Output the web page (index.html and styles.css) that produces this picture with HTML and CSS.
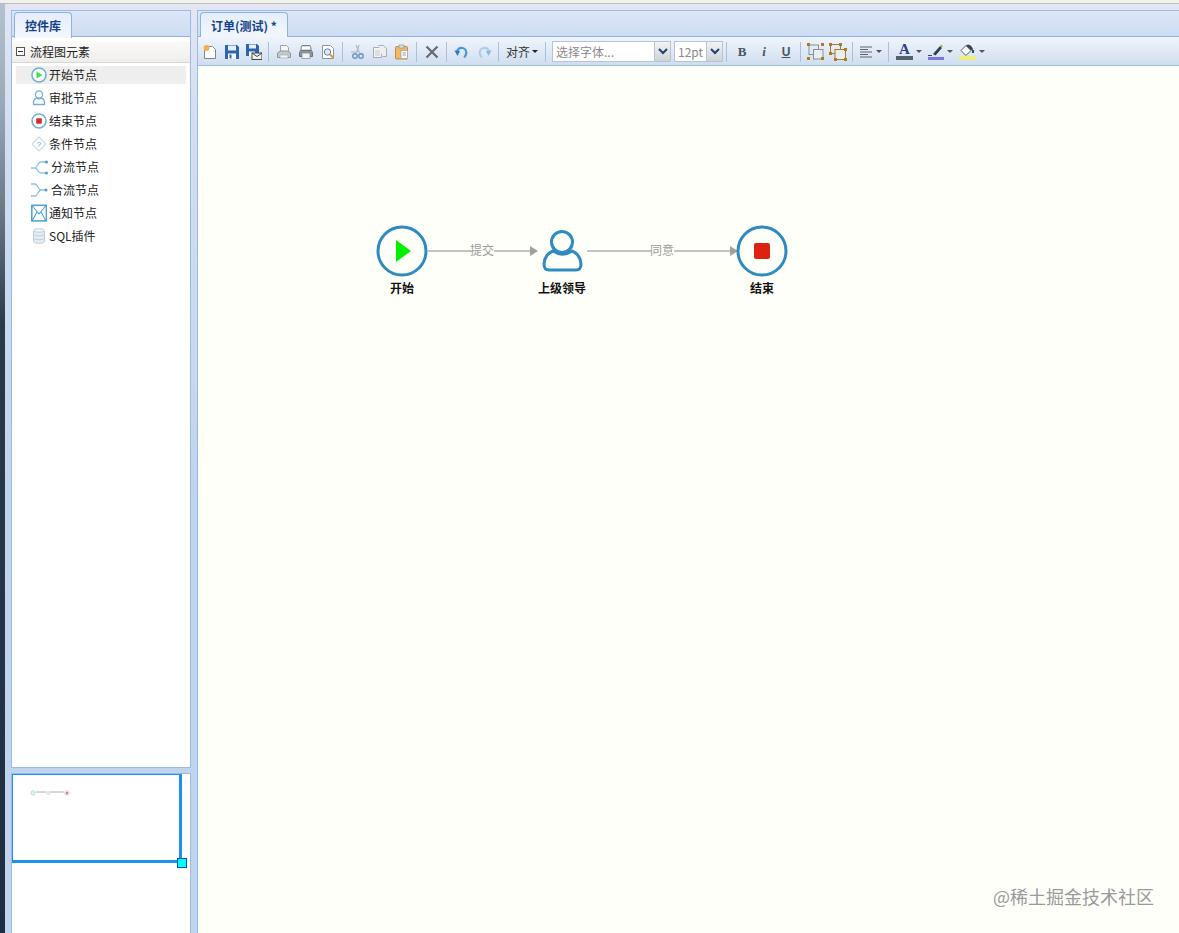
FILE: index.html
```html
<!DOCTYPE html>
<html lang="zh">
<head>
<meta charset="utf-8">
<title>流程设计器</title>
<link rel="stylesheet" href="styles.css">
</head>
<body>
<div class="shell">
  <div class="topline"></div>
  <div class="main">
    <div class="desk-edge"></div>
    <aside class="west">
      <section class="panel tree-panel">
        <div class="tabstrip"><div class="tab tab-lib">控件库</div></div>
        <div class="tree-head">
          <svg class="collapse" width="9" height="9" viewBox="0 0 9 9"><rect x=".5" y=".5" width="8" height="8" fill="#fff" stroke="#555"/><path d="M2 4.5h5" stroke="#333"/></svg>
          <span>流程图元素</span>
        </div>
        <ul class="tree">
          <li class="tree-item selected">
            <svg width="16" height="18" viewBox="0 0 16 18"><circle cx="8" cy="9" r="7" fill="#fff" stroke="#6fb0cf" stroke-width="1.6"/><path d="M5.5 5.5l6 3.5-6 3.5z" fill="#3fe04a"/></svg>开始节点</li>
          <li class="tree-item">
            <svg width="16" height="18" viewBox="0 0 16 18"><circle cx="8" cy="5.5" r="3.6" fill="#fff" stroke="#6fb0cf" stroke-width="1.3"/><path d="M2.5 15.5v-2.2c0-2.2 2-3.8 3.2-4.2 1.4.8 3.2.8 4.6 0 1.2.4 3.2 2 3.2 4.2v2.2z" fill="#fff" stroke="#6fb0cf" stroke-width="1.3" stroke-linejoin="round"/></svg>审批节点</li>
          <li class="tree-item">
            <svg width="16" height="18" viewBox="0 0 16 18"><circle cx="8" cy="9" r="7" fill="#fff" stroke="#6fb0cf" stroke-width="1.6"/><rect x="5.2" y="6.2" width="5.6" height="5.6" rx="1" fill="#d92b1c"/></svg>结束节点</li>
          <li class="tree-item">
            <svg width="16" height="18" viewBox="0 0 16 18"><path d="M8 2l7 7-7 7-7-7z" fill="#fff" stroke="#c6dbe8" stroke-width="1.2"/><text x="8" y="12" class="q">?</text></svg>条件节点</li>
          <li class="tree-item">
            <svg width="18" height="18" viewBox="0 0 18 18"><path d="M0 10h4c2 0 3-6 6-6h5M4 10c2 0 3 5 6 5h5" fill="none" stroke="#8cc3e0" stroke-width="1.3"/><circle cx="15.5" cy="4" r="1.6" fill="#5b9fd0"/><circle cx="15.5" cy="15" r="1.6" fill="#5b9fd0"/></svg>分流节点</li>
          <li class="tree-item">
            <svg width="18" height="18" viewBox="0 0 18 18"><path d="M0 3h4c3 0 3 6 6 6h5M0 15h4c3 0 3-6 6-6" fill="none" stroke="#8cc3e0" stroke-width="1.3"/><circle cx="15" cy="9" r="1.6" fill="#5b9fd0"/></svg>合流节点</li>
          <li class="tree-item">
            <svg width="16" height="18" viewBox="0 0 16 18"><rect x=".8" y="1.3" width="14.6" height="15.6" fill="#fff" stroke="#4b9fd0" stroke-width="1.5"/><path d="M1 1.5l7 8.5 7-8.5M1 17l5-9M15 17l-5-9" fill="none" stroke="#4b9fd0" stroke-width="1.1"/></svg>通知节点</li>
          <li class="tree-item">
            <svg width="16" height="18" viewBox="0 0 16 18"><path d="M2.5 3.5v11c0 2.4 11 2.4 11 0v-11z" fill="#e4edf2" stroke="#bcd0dc"/><ellipse cx="8" cy="3.5" rx="5.5" ry="1.8" fill="#f2f6f9" stroke="#bcd0dc"/><path d="M2.5 7.2c0 2.2 11 2.2 11 0M2.5 11c0 2.2 11 2.2 11 0" fill="none" stroke="#bcd0dc"/></svg>SQL插件</li>
        </ul>
      </section>
      <section class="panel overview">
        <div class="mini-view">
          <svg class="mini-flow" width="44" height="8" viewBox="0 0 44 8"><path d="M7 3h10M21 3h14" stroke="#999" stroke-width=".8"/><circle cx="4" cy="4" r="2.2" fill="#dff3e4" stroke="#a8d8c8" stroke-width=".7"/><rect x="17.5" y="2" width="4" height="4" fill="#e6e6e6"/><circle cx="38" cy="4" r="2.2" fill="#eee" stroke="#c0c0c8" stroke-width=".7"/><rect x="37.2" y="3.2" width="1.6" height="1.6" fill="#c44"/></svg>
          <div class="mini-handle"></div>
        </div>
      </section>
    </aside>
    <main class="panel center">
      <div class="tabstrip"><div class="tab tab-doc">订单(测试) *</div></div>
      <div class="toolbar">
        <button class="tool"><svg width="16" height="16" viewBox="0 0 16 16"><path d="M2.5 2.5h8l3 3v9h-11z" fill="#fff" stroke="#7b8794"/><circle cx="4.5" cy="4" r="3" fill="#f6b04a"/></svg></button>
        <button class="tool"><svg width="16" height="16" viewBox="0 0 16 16"><path d="M1 1h12l2 2v12H1z" fill="#2a66ae"/><rect x="4" y="1.5" width="8" height="5" fill="#e6eef8"/><rect x="4" y="9.5" width="8" height="5.5" fill="#fff"/><rect x="5.5" y="10.5" width="2" height="4" fill="#2a66ae"/></svg></button>
        <button class="tool"><svg width="16" height="16" viewBox="0 0 16 16"><path d="M0 0h11l2 2v10H0z" fill="#2a66ae"/><rect x="3" y=".5" width="7" height="4" fill="#e6eef8"/><rect x="3" y="7.5" width="6" height="4.5" fill="#fff"/><rect x="6" y="9" width="10" height="6.5" fill="#eef1f4" stroke="#444"/><path d="M6 9l5 3.5L16 9" fill="none" stroke="#444"/></svg></button>
        <span class="sep"></span>
        <button class="tool"><svg width="16" height="16" viewBox="0 0 16 16"><path d="M4.5 1.5h6l2 2v4h-8z" fill="#f5f6f7" stroke="#9aa3ab"/><path d="M1.5 9l3-2h7l3 2v4.5h-13z" fill="#c3c9cf" stroke="#8c959d"/><rect x="4" y="11" width="8" height="3" fill="#f2f3f4" stroke="#9aa3ab" stroke-width=".6"/></svg></button>
        <button class="tool"><svg width="16" height="16" viewBox="0 0 16 16"><path d="M4 1.5h8l1 2v3H3v-3z" fill="#d9dde0" stroke="#7c848b"/><path d="M2.5 6.5h11l1 2v4h-13v-4z" fill="#8e979f" stroke="#6d757c"/><rect x="4" y="3" width="8" height="2" fill="#fff"/><rect x="4" y="9" width="8" height="5.5" fill="#f2f3f4" stroke="#7c848b" stroke-width=".7"/></svg></button>
        <button class="tool"><svg width="16" height="16" viewBox="0 0 16 16"><path d="M2.5 1.5h8l3 3v10h-11z" fill="#fff" stroke="#8c959d"/><circle cx="7.5" cy="8" r="3.2" fill="#dcebf5" stroke="#6a7f90"/><path d="M10 10.5l3.5 3.5" stroke="#e09a3e" stroke-width="2"/></svg></button>
        <span class="sep"></span>
        <button class="tool"><svg width="16" height="16" viewBox="0 0 16 16"><path d="M9 1L6.5 9M6 1l3.5 8" stroke="#b5bec6" stroke-width="1.4" fill="none"/><path d="M1 8h6" stroke="#b5bec6" stroke-width="1.2"/><circle cx="5" cy="12" r="2.2" fill="none" stroke="#6b93c0" stroke-width="1.4"/><circle cx="11" cy="12" r="2.2" fill="none" stroke="#6b93c0" stroke-width="1.4"/></svg></button>
        <button class="tool"><svg width="16" height="16" viewBox="0 0 16 16"><path d="M1.5 3.5h6l2 2v8h-8z" fill="#f3f4f5" stroke="#a5adb5"/><path d="M6.5 1.5h5l3 3v8h-4" fill="#eceef0" stroke="#a5adb5"/><path d="M3 7h5M3 9h5M3 11h5" stroke="#c3c9cf"/></svg></button>
        <button class="tool"><svg width="16" height="16" viewBox="0 0 16 16"><rect x="1.5" y="2.5" width="12" height="12.5" rx="1" fill="#f2b866" stroke="#c98a32"/><rect x="5" y="1" width="5" height="3" fill="#d9dde0" stroke="#8c959d" stroke-width=".7"/><rect x="7" y="6.5" width="6.5" height="8" fill="#fff" stroke="#9aa3ab" stroke-width=".7"/><path d="M8.5 9h3.5M8.5 11h3.5" stroke="#9aa3ab"/></svg></button>
        <span class="sep"></span>
        <button class="tool"><svg width="16" height="16" viewBox="0 0 16 16"><path d="M2.5 2.5l11 11M13.5 2.5l-11 11" stroke="#5f6a74" stroke-width="2.2"/></svg></button>
        <span class="sep"></span>
        <button class="tool"><svg width="16" height="16" viewBox="0 0 16 16"><path d="M3 8.5c0-3.5 3-5 5.5-4.5 3 .5 4.8 3.5 3.2 7l-1.4 2.5" fill="none" stroke="#4c96d6" stroke-width="2.2"/><path d="M.5 6.5l5.5 .5-2.5 5z" fill="#2f78c0"/></svg></button>
        <button class="tool"><svg width="16" height="16" viewBox="0 0 16 16"><path d="M13 8.5c0-3.5-3-5-5.5-4.5-3 .5-4.8 3.500-3.200 7l1.400 2.500" fill="none" stroke="#a9cdea" stroke-width="2.200"/><path d="M15.500 6.500l-5.500 .5 2.500 5z" fill="#8ab8de"/></svg></button>
        <span class="sep"></span>
        <button class="tool tool-text">对齐<i class="caret"></i></button>
        <span class="sep sep-wide"></span>
        <div class="combo combo-font"><span class="combo-input placeholder">选择字体...</span><span class="combo-btn"><svg width="10" height="7" viewBox="0 0 10 7"><path d="M1 1l4 4 4-4" fill="none" stroke="#1f3f78" stroke-width="2"/></svg></span></div>
        <div class="combo combo-size"><span class="combo-input placeholder">12pt</span><span class="combo-btn"><svg width="10" height="7" viewBox="0 0 10 7"><path d="M1 1l4 4 4-4" fill="none" stroke="#1f3f78" stroke-width="2"/></svg></span></div>
        <span class="sep"></span>
        <button class="tool tool-b">B</button>
        <button class="tool tool-i">i</button>
        <button class="tool tool-u">U</button>
        <span class="sep"></span>
        <button class="tool"><svg width="18" height="18" viewBox="0 0 18 18"><rect x="2" y="2" width="9.500" height="9.500" fill="none" stroke="#8a8f96"/><rect x="6.500" y="6.500" width="9.500" height="9.500" fill="#e9eef4" stroke="#8a8f96"/><g fill="#a87d22"><rect x="0" y="0" width="3" height="3"/><rect x="14" y="0" width="3" height="3"/><rect x="0" y="14" width="3" height="3"/><rect x="14" y="14" width="3" height="3"/></g></svg></button>
        <button class="tool"><svg width="18" height="18" viewBox="0 0 18 18"><rect x="1.500" y="1.500" width="10" height="9" fill="none" stroke="#a87d22"/><rect x="6" y="6.500" width="10.500" height="10" fill="#e9eef4" stroke="#a87d22"/><g fill="#a87d22"><rect x="0" y="0" width="3" height="3"/><rect x="10" y="0" width="3" height="3"/><rect x="0" y="9" width="3" height="3"/><rect x="15" y="5" width="3" height="3"/><rect x="5" y="15" width="3" height="3"/><rect x="15" y="15" width="3" height="3"/></g></svg></button>
        <span class="sep"></span>
        <button class="tool tool-menu"><svg width="13" height="12" viewBox="0 0 13 12"><path d="M0 1h12M0 3.500h8M0 6h12M0 8.500h8M0 11h12" stroke="#5c6670"/></svg><i class="caret caret-grey"></i></button>
        <span class="sep"></span>
        <button class="tool tool-menu"><span class="swatch-a">A<i class="bar bar-slate"></i></span><i class="caret caret-grey"></i></button>
        <button class="tool tool-menu"><svg width="16" height="16" viewBox="0 0 16 16"><path d="M5 10l7-8 2 2-6.500 7.500z" fill="#2d3f55"/><path d="M12 2l1.500-1.500 1.500 1.500-1 1.500z" fill="#9cc13a"/><path d="M0 11.500h4" stroke="#444"/><rect y="13" width="16" height="3.500" fill="#7a78dc"/></svg><i class="caret caret-grey"></i></button>
        <button class="tool tool-menu"><svg width="17" height="16" viewBox="0 0 17 16"><path d="M2 6.500l5-5 5 5-5 5z" fill="#fff" stroke="#555"/><path d="M7 1.500l5 5 2-1c0-2-3-5-5-5z" fill="#34465e"/><path d="M14 6v3" stroke="#34465e" stroke-width="2"/><rect y="12.500" width="17" height="3.500" fill="#f2ef6a"/></svg><i class="caret caret-grey"></i></button>
      </div>
      <div class="canvas">
        <svg class="flow" width="981" height="867" viewBox="198 66 981 867">
          <g class="edge">
            <path d="M428 251h43M494 251h37M587 251h64M674 251h57"/>
          </g>
          <path class="arrow" d="M530 246l8 5-8 5zM730 246l8 5-8 5z"/>
          <text class="edge-label" x="482" y="255">提交</text>
          <text class="edge-label" x="662" y="255">同意</text>
          <circle class="node" cx="402" cy="251" r="24"/>
          <path d="M396 240l15 11-15 11z" fill="#00f000"/>
          <circle class="node" cx="562" cy="242" r="10.500"/>
          <path class="node" d="M553 251c-5 2-9 7-9 13 0 4 2 6 5 6h27c3 0 5-2 5-6 0-6-4-11-9-13-6 4-13 4-19 0z"/>
          <circle class="node" cx="762" cy="251" r="24"/>
          <rect x="754" y="243" width="16" height="16" rx="2" fill="#dd2211"/>
          <text class="node-label" x="402" y="293">开始</text>
          <text class="node-label" x="562" y="293">上级领导</text>
          <text class="node-label" x="762" y="293">结束</text>
        </svg>
        <div class="watermark">@稀土掘金技术社区</div>
      </div>
    </main>
  </div>
</div>
</body>
</html>
```
FILE: styles.css
```css
* { box-sizing: border-box; }
html, body { margin: 0; height: 100%; overflow: hidden; }
body {
  font: 12px "Noto Sans CJK SC", "Liberation Sans", sans-serif;
  color: #222;
  background: #fff;
}
.shell { display: flex; flex-direction: column; height: 933px; overflow: hidden; }
.topline { height: 4px; flex: none; background: #f0f1ea; border-bottom: 1px solid #bdbdb8; }
.main {
  flex: 1;
  display: flex;
  min-height: 0;
  padding-top: 6px;
  background: linear-gradient(#e3e6f2, #d3deef 120px, #c1d4ee 500px);
}
.desk-edge {
  flex: none;
  width: 5px;
  margin: -6px 6px 0 0;
  background: linear-gradient(#b4c2d0, #9aa9b8 100px, #6e7c88 200px, #2b3a4b 320px, #1f2d40);
}
.west { flex: none; width: 180px; display: flex; flex-direction: column; gap: 5px; margin-right: 6px; }
.panel { border: 1px solid #99bbe8; background: #fff; border-bottom: 0; }
.tree-panel { flex: none; height: 758px; border-bottom: 1px solid #99bbe8; }
.overview { flex: 1; position: relative; border-right: 1px solid #99bbe8; }
.center { flex: 1; min-width: 0; display: flex; flex-direction: column; border-right: 0; }
.tabstrip {
  height: 26px;
  padding: 1px 0 0 2px;
  display: flex;
  background: linear-gradient(#dce7f7, #cddcf2);
  border-bottom: 1px solid #8db2e3;
}
.tab {
  height: 26px;
  padding: 0 10px;
  font-weight: 700;
  line-height: 25px;
  color: #15428b;
  background: linear-gradient(#e4edf9, #f4f8fd);
  border: 1px solid #8db2e3;
  border-bottom: 0;
  border-radius: 4px 4px 0 0;
}
.tab-doc { font-size: 12px; }
.tree-head {
  height: 22px;
  margin-top: 4px;
  display: flex;
  align-items: center;
  gap: 5px;
  padding-left: 4px;
  background: linear-gradient(#fafafa, #f0eeea);
  border-bottom: 1px solid #d8d8d8;
  font-size: 12px;
}
.tree { list-style: none; margin: 3px 4px 0; padding: 0; }
.tree-item {
  height: 18px;
  margin-bottom: 5px;
  padding-left: 15px;
  display: flex;
  align-items: center;
  gap: 2px;
  line-height: 18px;
  white-space: nowrap;
}
.tree-item.selected { background: #eeeeee; }
.tree-item svg { flex: none; }
.q { font: 8px "Liberation Sans", sans-serif; fill: #7a9ab0; text-anchor: middle; }
.mini-view {
  position: absolute;
  left: 0;
  top: 0;
  width: 170px;
  height: 89px;
  border: solid #1a93ee;
  border-width: 1px 3px 3px 1px;
}
.mini-flow { position: absolute; left: 16px; top: 14px; }
.mini-handle {
  position: absolute;
  right: -8px;
  bottom: -8px;
  width: 10px;
  height: 10px;
  background: #0ff;
  border: 1px solid #0047c8;
}
.toolbar {
  flex: none;
  height: 29px;
  display: flex;
  align-items: center;
  padding: 1px 0 0 1px;
  background: linear-gradient(#f0f5fc, #d0def0);
  border-bottom: 1px solid #99bbe8;
}
.tool {
  flex: none;
  width: 22px;
  height: 22px;
  padding: 0;
  border: 0;
  background: none;
  display: flex;
  align-items: center;
  justify-content: center;
  color: #5a6570;
  font: 12px "Noto Sans CJK SC", "Liberation Sans", sans-serif;
}
.sep {
  flex: none;
  width: 8px;
  height: 20px;
  background: linear-gradient(#a9c0dc, #a9c0dc) 3px 0 / 1px 100% no-repeat;
}
.sep-wide { margin-left: 1px; }
.tool-text { width: 38px; color: #333; }
.caret {
  display: inline-block;
  margin-left: 2px;
  border: solid transparent;
  border-width: 3px 3px 0;
  border-top-color: #222;
}
.caret-grey { border-top-color: #555; margin-left: 3px; }
.combo { display: flex; flex: none; height: 21px; }
.combo-input {
  border: 1px solid #b5c4d4;
  border-right: 0;
  background: #fff;
  line-height: 19px;
  padding-left: 3px;
}
.placeholder { color: #8a8a8a; }
.combo-btn {
  width: 17px;
  display: flex;
  align-items: center;
  justify-content: center;
  border: 1px solid #b5c4d4;
  background: linear-gradient(#f2f3f3, #cfd3d6);
}
.combo-font { width: 119px; margin-left: 2px; margin-right: 3px; }
.combo-font .combo-input { width: 102px; }
.combo-size { width: 49px; }
.combo-size .combo-input { width: 32px; }
.tool-b { font: 700 13px "Liberation Serif", serif; color: #4a5560; }
.tool-i { font: italic 700 13px "Liberation Serif", serif; color: #4a5560; }
.tool-u { font: 700 12px "Liberation Sans", sans-serif; color: #4a5560; text-decoration: underline; }
.tool-menu { width: auto; min-width: 24px; padding: 0 3px; }
.swatch-a {
  position: relative;
  width: 17px;
  height: 17px;
  font: 700 15px/13px "Liberation Serif", serif;
  color: #2a3f8e;
  text-align: center;
}
.bar { position: absolute; left: 0; right: 0; bottom: 0; height: 4px; }
.bar-slate { background: #55606c; }
.canvas { flex: 1; position: relative; overflow: hidden; background: #fffffa; }
.flow { display: block; }
.edge path { stroke: #b0b0b0; stroke-width: 1.6; fill: none; }
.arrow { fill: #a0a0a0; }
.edge-label { font-size: 12px; fill: #9a9a9a; text-anchor: middle; }
.node { fill: none; stroke: #2e8bbf; stroke-width: 3; }
.node-label { font-size: 12px; font-weight: 700; fill: #111; text-anchor: middle; }
.watermark {
  position: absolute;
  right: 25px;
  bottom: 24px;
  font-size: 18px;
  color: #9a9a9a;
  white-space: nowrap;
}
```
